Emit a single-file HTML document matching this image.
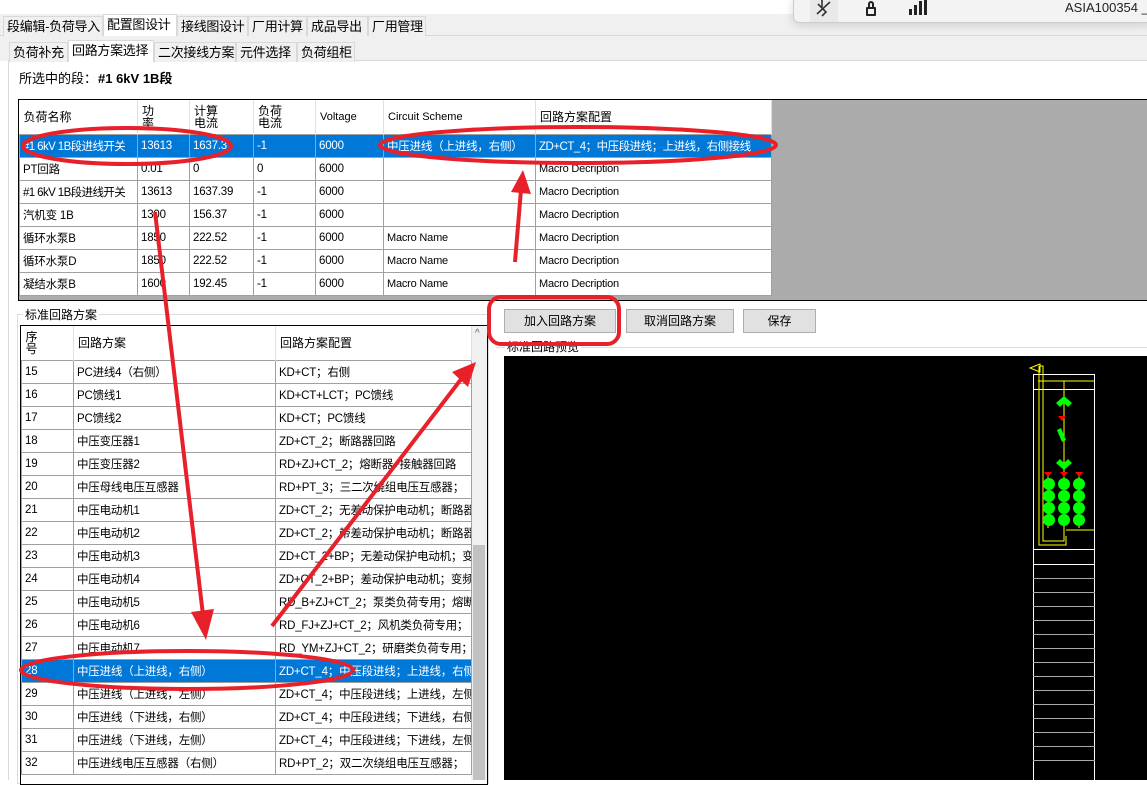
<!DOCTYPE html>
<html><head><meta charset="utf-8"><style>
*{margin:0;padding:0;box-sizing:border-box}
body{width:1147px;height:780px;overflow:hidden;background:#fff;font-family:"Liberation Sans","Noto Sans CJK SC",sans-serif;font-size:12px;color:#000;position:relative}
.a{position:absolute}
.tab{position:absolute;height:20px;border:1px solid #d9d9d9;border-bottom:none;background:#f0f0f0;font-size:13px;line-height:19px;padding:0 3px;white-space:nowrap;overflow:hidden;letter-spacing:-0.3px}
.tab.s{background:#fff;height:22px}
table{border-collapse:collapse;table-layout:fixed;position:absolute}
td{border:1px solid #a0a0a0;height:23px;padding:0 3px;white-space:nowrap;overflow:hidden;font-size:11.5px;letter-spacing:-0.2px}
tr.sel td{background:#0078d7;color:#fff}
th{font-weight:normal;text-align:left;border-right:1px solid #e0e0e0;padding:0 4px;font-size:12px;line-height:12px;vertical-align:middle;overflow:hidden}
.btn{position:absolute;height:24px;background:#e1e1e1;border:1px solid #adadad;text-align:center;line-height:22px;font-size:12px}
</style></head><body>
<div class="a" style="left:0;top:14px;width:1147px;height:22px;background:#f0f0f0;border-bottom:1px solid #d9d9d9"></div>
<div class="tab" style="left:3px;top:16px;width:100px">段编辑-负荷导入</div>
<div class="tab s" style="left:103px;top:14px;width:74px">配置图设计</div>
<div class="tab" style="left:177px;top:16px;width:71px">接线图设计</div>
<div class="tab" style="left:248px;top:16px;width:59px">厂用计算</div>
<div class="tab" style="left:307px;top:16px;width:61px">成品导出</div>
<div class="tab" style="left:368px;top:16px;width:58px">厂用管理</div>
<div class="a" style="left:0;top:36px;width:1147px;height:25px;background:#f0f0f0"></div>
<div class="a" style="left:8px;top:60px;width:1139px;height:720px;background:#fff;border-left:1px solid #d9d9d9;border-top:1px solid #d9d9d9"></div>
<div class="tab" style="left:9px;top:42px;width:59px">负荷补充</div>
<div class="tab s" style="left:68px;top:40px;width:86px;background:#fff">回路方案选择</div>
<div class="tab" style="left:154px;top:42px;width:82px">二次接线方案</div>
<div class="tab" style="left:236px;top:42px;width:61px">元件选择</div>
<div class="tab" style="left:297px;top:42px;width:58px">负荷组柜</div>
<div class="a" style="left:19px;top:68px;font-size:13px">所选中的段：</div>
<div class="a" style="left:98px;top:68px;font-size:13px;font-weight:bold">#1 6kV 1B段</div>

<div class="a" style="left:18px;top:99px;width:1129px;height:202px;border:1px solid #000;border-right:none;background:#ababab"></div>
<table style="left:19px;top:100px;width:752px;background:#fff">
<colgroup><col style="width:118px"><col style="width:52px"><col style="width:64px"><col style="width:62px"><col style="width:68px"><col style="width:152px"><col style="width:236px"></colgroup>
<tr style="height:34px"><th>负荷名称</th><th>功<br>率</th><th>计算<br>电流</th><th>负荷<br>电流</th><th style="font-size:11px">Voltage</th><th style="font-size:11px">Circuit Scheme</th><th>回路方案配置</th></tr>
<tr class="sel"><td style="letter-spacing:-0.6px">#1 6kV 1B段进线开关</td><td>13613</td><td>1637.3</td><td>-1</td><td>6000</td><td>中压进线（上进线，右侧）</td><td style="letter-spacing:-0.5px">ZD+CT_4；中压段进线；上进线，右侧接线</td></tr>
<tr><td>PT回路</td><td>0.01</td><td>0</td><td>0</td><td>6000</td><td></td><td style="font-size:11px">Macro Decription</td></tr>
<tr><td style="letter-spacing:-0.6px">#1 6kV 1B段进线开关</td><td>13613</td><td>1637.39</td><td>-1</td><td>6000</td><td></td><td style="font-size:11px">Macro Decription</td></tr>
<tr><td>汽机变 1B</td><td>1300</td><td>156.37</td><td>-1</td><td>6000</td><td></td><td style="font-size:11px">Macro Decription</td></tr>
<tr><td>循环水泵B</td><td>1850</td><td>222.52</td><td>-1</td><td>6000</td><td style="font-size:11px">Macro Name</td><td style="font-size:11px">Macro Decription</td></tr>
<tr><td>循环水泵D</td><td>1850</td><td>222.52</td><td>-1</td><td>6000</td><td style="font-size:11px">Macro Name</td><td style="font-size:11px">Macro Decription</td></tr>
<tr><td>凝结水泵B</td><td>1600</td><td>192.45</td><td>-1</td><td>6000</td><td style="font-size:11px">Macro Name</td><td style="font-size:11px">Macro Decription</td></tr>
</table>

<div class="a" style="left:17px;top:314px;width:472px;height:470px;border:1px solid #dcdcdc"></div>
<div class="a" style="left:23px;top:306px;background:#fff;padding:0 2px;font-size:12px">标准回路方案</div>
<div class="a" style="left:20px;top:325px;width:468px;height:460px;border:1px solid #000;background:#fff"></div>
<div class="a" style="left:471px;top:326px;width:16px;height:454px;background:#f0f0f0"></div>
<div class="a" style="left:473px;top:545px;width:12px;height:235px;background:#c2c2c2"></div>
<div class="a" style="left:475px;top:328px;font-size:10px;color:#606060">^</div>
<table style="left:21px;top:326px;width:450px">
<colgroup><col style="width:52px"><col style="width:202px"><col style="width:196px"></colgroup>
<tr style="height:34px"><th>序<br>号</th><th>回路方案</th><th>回路方案配置</th></tr>
<tr><td>15</td><td>PC进线4（右侧）</td><td>KD+CT；右侧</td></tr>
<tr><td>16</td><td>PC馈线1</td><td>KD+CT+LCT；PC馈线</td></tr>
<tr><td>17</td><td>PC馈线2</td><td>KD+CT；PC馈线</td></tr>
<tr><td>18</td><td>中压变压器1</td><td>ZD+CT_2；断路器回路</td></tr>
<tr><td>19</td><td>中压变压器2</td><td>RD+ZJ+CT_2；熔断器+接触器回路</td></tr>
<tr><td>20</td><td>中压母线电压互感器</td><td>RD+PT_3；三二次绕组电压互感器；</td></tr>
<tr><td>21</td><td>中压电动机1</td><td>ZD+CT_2；无差动保护电动机；断路器</td></tr>
<tr><td>22</td><td>中压电动机2</td><td>ZD+CT_2；带差动保护电动机；断路器</td></tr>
<tr><td>23</td><td>中压电动机3</td><td>ZD+CT_2+BP；无差动保护电动机；变</td></tr>
<tr><td>24</td><td>中压电动机4</td><td>ZD+CT_2+BP；差动保护电动机；变频</td></tr>
<tr><td>25</td><td>中压电动机5</td><td>RD_B+ZJ+CT_2；泵类负荷专用；熔断</td></tr>
<tr><td>26</td><td>中压电动机6</td><td>RD_FJ+ZJ+CT_2；风机类负荷专用；</td></tr>
<tr><td>27</td><td>中压电动机7</td><td>RD_YM+ZJ+CT_2；研磨类负荷专用；</td></tr>
<tr class="sel"><td>28</td><td>中压进线（上进线，右侧）</td><td>ZD+CT_4；中压段进线；上进线，右侧</td></tr>
<tr><td>29</td><td>中压进线（上进线，左侧）</td><td>ZD+CT_4；中压段进线；上进线，左侧</td></tr>
<tr><td>30</td><td>中压进线（下进线，右侧）</td><td>ZD+CT_4；中压段进线；下进线，右侧</td></tr>
<tr><td>31</td><td>中压进线（下进线，左侧）</td><td>ZD+CT_4；中压段进线；下进线，左侧</td></tr>
<tr><td>32</td><td>中压进线电压互感器（右侧）</td><td>RD+PT_2；双二次绕组电压互感器；</td></tr>
</table>

<div class="btn" style="left:504px;top:309px;width:112px">加入回路方案</div>
<div class="btn" style="left:626px;top:309px;width:108px">取消回路方案</div>
<div class="btn" style="left:743px;top:309px;width:73px">保存</div>
<div class="a" style="left:496px;top:347px;width:651px;border-top:1px solid #dcdcdc"></div>
<div class="a" style="left:505px;top:338px;background:#fff;padding:0 2px">标准回路预览</div>
<div class="a" style="left:504px;top:356px;width:643px;height:424px;background:#000"></div>

<svg class="a" style="left:0;top:0" width="1147" height="780">
<g fill="none" stroke="#fff" stroke-width="1">
<rect x="1033.5" y="374.5" width="61" height="410"/>
<line x1="1033" y1="389.5" x2="1095" y2="389.5"/>
<line x1="1033" y1="549.5" x2="1095" y2="549.5"/>
<line x1="1033" y1="564.5" x2="1095" y2="564.5"/>
<g stroke="#aaa"><line x1="1033" y1="578.5" x2="1095" y2="578.5"/><line x1="1033" y1="592.5" x2="1095" y2="592.5"/><line x1="1033" y1="606.5" x2="1095" y2="606.5"/><line x1="1033" y1="620.5" x2="1095" y2="620.5"/><line x1="1033" y1="634.5" x2="1095" y2="634.5"/><line x1="1033" y1="648.5" x2="1095" y2="648.5"/><line x1="1033" y1="662.5" x2="1095" y2="662.5"/><line x1="1033" y1="676.5" x2="1095" y2="676.5"/><line x1="1033" y1="690.5" x2="1095" y2="690.5"/><line x1="1033" y1="704.5" x2="1095" y2="704.5"/><line x1="1033" y1="718.5" x2="1095" y2="718.5"/><line x1="1033" y1="732.5" x2="1095" y2="732.5"/><line x1="1033" y1="746.5" x2="1095" y2="746.5"/><line x1="1033" y1="760.5" x2="1095" y2="760.5"/></g>
</g>
<g fill="none" stroke="#ff0" stroke-width="1">
<path d="M1040 364 L1030 368 L1040 372 Z M1040 366 H1043 V541 H1064 V536 M1038 381 H1094 M1064 381 V540 M1066 530 H1094"/>
<path d="M1039 366 V545 H1066 V536"/>
<line x1="1048" y1="476" x2="1048" y2="528"/><line x1="1079" y1="476" x2="1079" y2="528"/>
</g>
<g fill="#0f0">
<path d="M1056 403 L1064 396 L1072 403 L1068 407 L1064 403 L1060 407Z"/>
<path d="M1057 430 L1061 428 L1066 440 L1062 442Z"/>
<path d="M1056 463 L1064 470 L1072 463 L1068 459 L1064 463 L1060 459Z"/>
<g><circle cx="1049" cy="484" r="6"/><circle cx="1064" cy="484" r="6"/><circle cx="1079" cy="484" r="6"/>
<circle cx="1049" cy="496" r="6"/><circle cx="1064" cy="496" r="6"/><circle cx="1079" cy="496" r="6"/>
<circle cx="1049" cy="508" r="6"/><circle cx="1064" cy="508" r="6"/><circle cx="1079" cy="508" r="6"/>
<circle cx="1049" cy="520" r="6"/><circle cx="1064" cy="520" r="6"/><circle cx="1079" cy="520" r="6"/></g>
</g>
<g fill="#f00"><path d="M1058 416h8l-4 5z"/><path d="M1044 472h8l-4 5z"/><path d="M1060 472h8l-4 5z"/><path d="M1075 472h8l-4 5z"/></g>
<g fill="none" stroke="#e8202a" stroke-width="4">
<ellipse cx="127" cy="146" rx="104" ry="18"/>
<ellipse cx="578" cy="145" rx="198" ry="18"/>
<rect x="489" y="297" width="130" height="47" rx="12"/>
<ellipse cx="187" cy="670" rx="166" ry="19"/>
<line x1="155" y1="212" x2="203" y2="615"/>
<line x1="272" y1="626" x2="462" y2="378"/>
<line x1="515" y1="262" x2="521" y2="190"/>
</g>
<g fill="#e8202a">
<path d="M191 612 L214 609 L206 640Z"/>
<path d="M452 372 L476 362 L468 387Z"/>
<path d="M511 192 L531 194 L523 170Z"/>
</g>
</svg>

<div class="a" style="left:793px;top:-4px;width:360px;height:27px;background:#f3f3f3;border:1px solid #ccc;border-radius:6px;box-shadow:0 2px 10px rgba(0,0,0,.15)"></div>
<div class="a" style="left:810px;top:0;width:28px;height:22px;background:#e9e9e9"></div>
<svg class="a" style="left:814px;top:0" width="20" height="18"><g stroke="#333" stroke-width="1.6" fill="none"><path d="M4 4 L12 12 L8 16 M8 0 L8 7 M3 14 L16 2"/></g></svg>
<div class="a" style="left:866px;top:7px;width:10px;height:9px;border:2px solid #222;border-radius:1px"></div>
<div class="a" style="left:868px;top:1px;width:6px;height:7px;border:2px solid #222;border-bottom:none;border-radius:3px 3px 0 0"></div>
<div class="a" style="left:909px;top:9px;width:3px;height:6px;background:#222"></div>
<div class="a" style="left:914px;top:5px;width:3px;height:10px;background:#222"></div>
<div class="a" style="left:919px;top:1px;width:3px;height:14px;background:#222"></div>
<div class="a" style="left:924px;top:-2px;width:3px;height:17px;background:#222"></div>
<div class="a" style="left:1065px;top:0;font-size:13px;color:#222;white-space:nowrap">ASIA100354 _</div>
</body></html>
